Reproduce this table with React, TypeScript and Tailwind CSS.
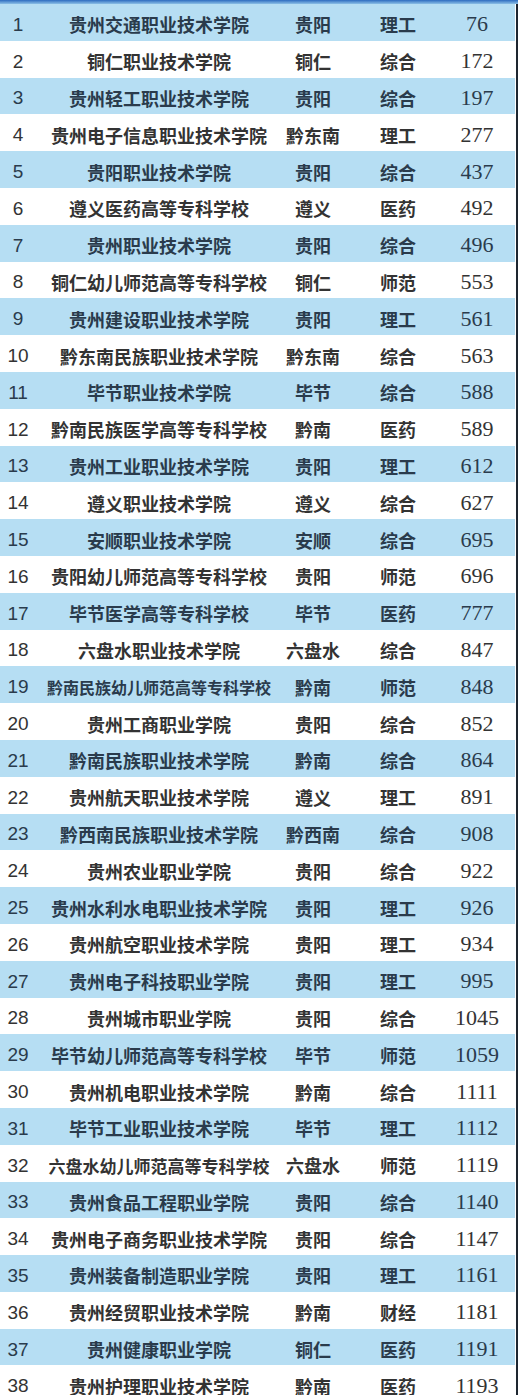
import React from "react";

type Row = [number, string, string, string, number];

const rows: Row[] = [
  [1, "贵州交通职业技术学院", "贵阳", "理工", 76],
  [2, "铜仁职业技术学院", "铜仁", "综合", 172],
  [3, "贵州轻工职业技术学院", "贵阳", "综合", 197],
  [4, "贵州电子信息职业技术学院", "黔东南", "理工", 277],
  [5, "贵阳职业技术学院", "贵阳", "综合", 437],
  [6, "遵义医药高等专科学校", "遵义", "医药", 492],
  [7, "贵州职业技术学院", "贵阳", "综合", 496],
  [8, "铜仁幼儿师范高等专科学校", "铜仁", "师范", 553],
  [9, "贵州建设职业技术学院", "贵阳", "理工", 561],
  [10, "黔东南民族职业技术学院", "黔东南", "综合", 563],
  [11, "毕节职业技术学院", "毕节", "综合", 588],
  [12, "黔南民族医学高等专科学校", "黔南", "医药", 589],
  [13, "贵州工业职业技术学院", "贵阳", "理工", 612],
  [14, "遵义职业技术学院", "遵义", "综合", 627],
  [15, "安顺职业技术学院", "安顺", "综合", 695],
  [16, "贵阳幼儿师范高等专科学校", "贵阳", "师范", 696],
  [17, "毕节医学高等专科学校", "毕节", "医药", 777],
  [18, "六盘水职业技术学院", "六盘水", "综合", 847],
  [19, "黔南民族幼儿师范高等专科学校", "黔南", "师范", 848],
  [20, "贵州工商职业学院", "贵阳", "综合", 852],
  [21, "黔南民族职业技术学院", "黔南", "综合", 864],
  [22, "贵州航天职业技术学院", "遵义", "理工", 891],
  [23, "黔西南民族职业技术学院", "黔西南", "综合", 908],
  [24, "贵州农业职业学院", "贵阳", "综合", 922],
  [25, "贵州水利水电职业技术学院", "贵阳", "理工", 926],
  [26, "贵州航空职业技术学院", "贵阳", "理工", 934],
  [27, "贵州电子科技职业学院", "贵阳", "理工", 995],
  [28, "贵州城市职业学院", "贵阳", "综合", 1045],
  [29, "毕节幼儿师范高等专科学校", "毕节", "师范", 1059],
  [30, "贵州机电职业技术学院", "黔南", "综合", 1111],
  [31, "毕节工业职业技术学院", "毕节", "理工", 1112],
  [32, "六盘水幼儿师范高等专科学校", "六盘水", "师范", 1119],
  [33, "贵州食品工程职业学院", "贵阳", "综合", 1140],
  [34, "贵州电子商务职业技术学院", "贵阳", "综合", 1147],
  [35, "贵州装备制造职业学院", "贵阳", "理工", 1161],
  [36, "贵州经贸职业技术学院", "黔南", "财经", 1181],
  [37, "贵州健康职业学院", "铜仁", "医药", 1191],
  [38, "贵州护理职业技术学院", "黔南", "医药", 1193],
];

const cjk = "font-['Noto_Sans_CJK_SC',sans-serif] font-bold";

function nameSize(name: string) {
  if (name.length >= 14) return "text-[16px]";
  if (name.length === 13) return "text-[17px]";
  return "text-[18px]";
}

export default function App() {
  return (
    <div className="w-[518px] h-[1395px] overflow-hidden bg-white">
      <div className="h-[4px] bg-gradient-to-b from-[#2d6cbf] to-[#8cc0e6]" />
      <div className="flex">
        <div className="w-[515px] flex flex-col">
          {rows.map(([rank, name, city, kind, score]) => (
            <div
              key={rank}
              className={`h-[36.8px] shrink-0 pt-[4px] grid grid-cols-[36px_246px_62px_108px_50px] items-center text-center leading-none ${
                rank % 2 === 1 ? "bg-[#b6def3] text-[#2a3b4c]" : "bg-white text-[#333333]"
              }`}
            >
              <span className="font-['Liberation_Sans',sans-serif] text-[19px]">{rank}</span>
              <span className={`${cjk} ${nameSize(name)} whitespace-nowrap`}>{name}</span>
              <span className={`${cjk} text-[18px] whitespace-nowrap`}>{city}</span>
              <span className={`${cjk} text-[18px]`}>{kind}</span>
              <span className="font-['Liberation_Serif',serif] text-[22px]">{score}</span>
            </div>
          ))}
        </div>
        <div className="w-px bg-white" />
        <div className="w-[2px] bg-[#1e2630]" />
      </div>
    </div>
  );
}
